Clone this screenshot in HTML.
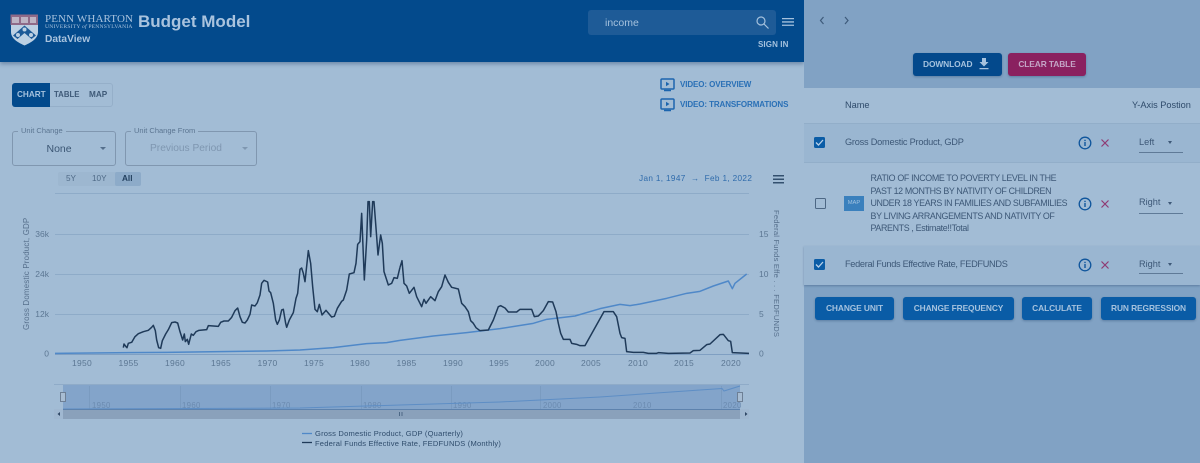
<!DOCTYPE html>
<html><head><meta charset="utf-8"><style>
html,body{margin:0;padding:0}
body{width:1200px;height:463px;position:relative;overflow:hidden;background:#a2bcd5;font-family:"Liberation Sans",sans-serif}
.t{position:absolute;white-space:nowrap;line-height:1}
.b{position:absolute;border-radius:3px;box-shadow:0 1px 2px rgba(30,60,100,.35);color:#a5c2de;font-size:8.400px;font-weight:bold;text-align:center;letter-spacing:-.1px}
.r{position:absolute;left:804px;width:396px}
.tx{color:#3d5877;font-size:9.200px;letter-spacing:-.3px}
.sel{color:#3d5877;font-size:9.200px}
.cb{position:absolute;left:814px;width:11px;height:11px;border-radius:1.500px;background:#0a5ca6}
.fs{position:absolute;border:1px solid #8097b0;border-radius:3px;box-sizing:border-box}
.leg{position:absolute;background:#a2bcd5;padding:0 3px;font-size:7.500px;color:#5b7591;line-height:10px}
</style></head><body>
<div style="position:absolute;left:0;top:0;width:804px;height:62px;background:#034a8c;box-shadow:0 2px 4px rgba(30,60,100,.4)"></div>
<div style="position:absolute;left:804px;top:0;width:396px;height:463px;background:#81a2c4"></div>

<svg style="position:absolute;left:10px;top:14px" width="29" height="32" viewBox="0 0 29 32">
<path d="M0.500 0.500H28V11H0.500Z" fill="#8f6a88"/>
<path d="M2 3h7v6H2zM11 3h7v6h-7zM20 3h6v6h-6z" fill="#d0d4de" opacity=".7"/>
<path d="M1 11H28V18C28 25 20 29 14.500 31.500C9 29 1 25 1 18Z" fill="#bcd0e3"/>
<path d="M14.500 11.500L26 21.500L21.500 25L14.500 19L7.500 25L3 21.500Z" fill="#1d5a97"/>
<circle cx="14.500" cy="15.500" r="2" fill="#bcd0e3"/><circle cx="8" cy="21" r="2" fill="#bcd0e3"/><circle cx="21" cy="21" r="2" fill="#bcd0e3"/>
</svg>
<div class="t" style="left:45px;top:14px;font-family:'Liberation Serif',serif;font-size:11px;color:#a9c3de;letter-spacing:.12px">PENN WHARTON</div>
<div class="t" style="left:45px;top:25px;font-family:'Liberation Serif',serif;font-size:5.600px;color:#a9c3de;letter-spacing:.2px">UNIVERSITY <i>of</i> PENNSYLVANIA</div>
<div class="t" style="left:45px;top:35px;font-size:10.200px;color:#a9c3de;font-weight:bold">DataView</div>
<div class="t" style="left:138px;top:13px;font-size:17px;color:#a9c3de;font-weight:bold">Budget Model</div>

<div style="position:absolute;left:588px;top:10px;width:188px;height:25px;border-radius:3px;background:#1e5b97"></div>
<div class="t" style="left:605px;top:17.500px;font-size:10.500px;color:#a5c1dd">income</div>
<svg style="position:absolute;left:755px;top:15px" width="15" height="15" viewBox="0 0 15 15" fill="none" stroke="#a5c1dd" stroke-width="1.200"><circle cx="6" cy="6" r="4"/><path d="M9 9l4.500 4.500"/></svg>
<svg style="position:absolute;left:782px;top:17px" width="12" height="10" viewBox="0 0 12 10" fill="#a5c1dd"><path d="M0 1h12v1.300H0zM0 4.300h12v1.300H0zM0 7.600h12v1.300H0z"/></svg>
<div class="t" style="left:758px;top:41px;font-size:8px;font-weight:bold;color:#a5c1dd;letter-spacing:.1px">SIGN IN</div>

<div style="position:absolute;left:12px;top:83px;width:101px;height:24px;border:1px solid #95afc9;box-sizing:border-box;border-radius:3px"></div>
<div style="position:absolute;left:12px;top:83px;width:38px;height:24px;background:#034a8c;border-radius:3px 0 0 3px"></div>
<div class="t" style="left:17px;top:91px;font-size:8.200px;font-weight:bold;color:#a5c1dd">CHART</div>
<div class="t" style="left:54px;top:91px;font-size:7.800px;font-weight:bold;color:#3f5a78">TABLE</div>
<div class="t" style="left:89px;top:91px;font-size:8.200px;font-weight:bold;color:#3f5a78">MAP</div>

<div class="fs" style="left:12px;top:131px;width:104px;height:35px"></div>
<div class="leg" style="left:18px;top:126px">Unit Change</div>
<div class="t" style="left:46.500px;top:143.500px;font-size:10.500px;color:#3b5674">None</div>
<div style="position:absolute;left:100px;top:147px;border:3px solid transparent;border-top:3.500px solid #556f8c"></div>
<div class="fs" style="left:125px;top:131px;width:132px;height:35px"></div>
<div class="leg" style="left:131px;top:126px">Unit Change From</div>
<div class="t" style="left:150px;top:143.500px;font-size:10.200px;color:#7f97b1">Previous Period</div>
<div style="position:absolute;left:242px;top:147px;border:3px solid transparent;border-top:3.500px solid #7f97b1"></div>

<svg style="position:absolute;left:660px;top:78px" width="15" height="14" viewBox="0 0 15 14" fill="none"><rect x="1" y="1" width="13" height="10" rx="1" stroke="#1c65ae" stroke-width="1.500"/><path d="M6 3.800l3.500 2.200-3.500 2.200z" fill="#1c65ae"/><path d="M4 12.500h7" stroke="#1c65ae" stroke-width="1.500"/></svg>
<svg style="position:absolute;left:660px;top:98px" width="15" height="14" viewBox="0 0 15 14" fill="none"><rect x="1" y="1" width="13" height="10" rx="1" stroke="#1c65ae" stroke-width="1.500"/><path d="M6 3.800l3.500 2.200-3.500 2.200z" fill="#1c65ae"/><path d="M4 12.500h7" stroke="#1c65ae" stroke-width="1.500"/></svg>
<div class="t" style="left:680px;top:81px;font-size:8px;font-weight:bold;color:#2a70b6;letter-spacing:-.1px">VIDEO: OVERVIEW</div>
<div class="t" style="left:680px;top:101px;font-size:8px;font-weight:bold;color:#2a70b6;letter-spacing:-.1px">VIDEO: TRANSFORMATIONS</div>

<div style="position:absolute;left:58px;top:172px;width:83px;height:14px;border-radius:2px;background:#9db7d0"></div>
<div style="position:absolute;left:115px;top:172px;width:26px;height:14px;border-radius:2px;background:#8dabc9"></div>
<div class="t" style="left:66px;top:175px;font-size:8.200px;color:#4f6a87">5Y</div>
<div class="t" style="left:92px;top:175px;font-size:8.200px;color:#4f6a87">10Y</div>
<div class="t" style="left:122px;top:175px;font-size:8.200px;font-weight:bold;color:#23405f">All</div>
<div class="t" style="left:639px;top:175px;font-size:8.200px;color:#2f6bab;letter-spacing:.35px">Jan 1, 1947 &nbsp;→&nbsp; Feb 1, 2022</div>
<svg style="position:absolute;left:773px;top:175px" width="11" height="9" viewBox="0 0 11 9" fill="#33506f"><path d="M0 0h11v1.500H0zM0 3.500h11v1.500H0zM0 7h11v1.500H0z"/></svg>

<svg style="position:absolute;left:0;top:0" width="804" height="463" font-family="'Liberation Sans',sans-serif">
<g stroke="#8eabc8" stroke-width="1"><path d="M55 193.500H749M55 234.500H749M55 274.500H749M55 314.500H749"/><path d="M55 354.500H749" stroke="#7f9fc2"/></g>
<g font-size="8.500" fill="#5c7793" text-anchor="end"><text x="49" y="237">36k</text><text x="49" y="277">24k</text><text x="49" y="317">12k</text><text x="49" y="356.500">0</text></g>
<g font-size="8.500" fill="#5c7793"><text x="759" y="237">15</text><text x="759" y="277">10</text><text x="759" y="317">5</text><text x="759" y="356.500">0</text></g>
<g font-size="8.500" fill="#5c7793" text-anchor="middle" letter-spacing=".3"><text x="82" y="366">1950</text><text x="128.500" y="366">1955</text><text x="175" y="366">1960</text><text x="221" y="366">1965</text><text x="267.500" y="366">1970</text><text x="314" y="366">1975</text><text x="360" y="366">1980</text><text x="406.500" y="366">1985</text><text x="453" y="366">1990</text><text x="499" y="366">1995</text><text x="545" y="366">2000</text><text x="591" y="366">2005</text><text x="638" y="366">2010</text><text x="684" y="366">2015</text><text x="731" y="366">2020</text></g>
<text transform="translate(29 330) rotate(-90)" font-size="7.900" fill="#566f8c" letter-spacing=".2">Gross Domestic Product, GDP</text>
<text transform="translate(774 210) rotate(90)" font-size="7.600" fill="#566f8c" letter-spacing=".2">Federal Funds Effe . . . FEDFUNDS</text>

<g fill="none" stroke-linejoin="round">
<g transform="translate(0 180) scale(.33333)">
<path stroke="#4f88c8" stroke-width="4.500" d="M165 520L500 517L800 513L900 510L1000 503L1100 491L1160 488L1200 481"/>
<path stroke="#1f3a59" stroke-width="4.500" d="M370 503L372 492L378 500L381 503L385 490L395 487L405 470L415 461L430 455L445 451L455 442L460 436L466 452L470 480L476 503L482 505L487 482L497 462L505 449L515 428L525 426L533 429L540 455L548 480L553 462L556 485L562 478L566 493L574 462L580 466L588 455L597 451L620 449L625 437L655 439L662 427L672 423L685 423L695 412L705 392L713 384L720 410L727 427L735 429L742 420L750 403L755 375L765 378L772 368L780 345L785 310L792 301L803 306L807 333L812 338L820 370L827 420L832 433L838 420L845 390L850 388L857 430L860 442L868 420L880 398L888 355L893 340L900 268L905 264L910 280L915 305L925 212L932 250L938 320L945 388L952 395L958 373L966 405L978 391L995 411L1003 409L1012 385L1025 364L1030 360L1040 330L1048 282L1062 278L1068 250L1073 193L1080 185L1085 100L1093 300L1100 180L1104 65L1108 65L1112 170L1118 65L1122 65L1130 170L1134 225L1142 165L1147 190L1152 275L1165 315L1175 310L1182 293L1192 295L1200 262"/>
</g>
<g transform="translate(400 180) scale(.33333)">
<path stroke="#4f88c8" stroke-width="4.500" d="M0 481L100 468L200 458L300 446L400 430L440 418L525 408L600 386L660 373L690 377L720 372L800 355L860 340L900 334L940 318L985 303L997 326L1005 310L1040 282"/>
<path stroke="#1f3a59" stroke-width="4.500" d="M0 262L6 242L12 310L20 318L28 340L42 322L50 350L65 380L72 358L78 370L92 350L105 362L115 335L125 320L135 285L145 307L155 322L175 327L185 370L195 380L205 395L212 422L220 430L228 443L240 452L265 450L280 420L295 380L302 377L315 384L325 396L350 396L360 388L395 388L403 410L415 408L430 392L445 365L458 366L468 395L475 430L482 460L490 478L510 478L515 490L530 493L540 497L555 497L612 395L640 395L650 410L660 460L665 473L675 475L680 515L700 517L730 517L745 520L770 520L775 518L805 520L870 519L880 512L900 511L920 494L930 492L960 464L970 463L985 482L992 484L997 518L1047 520"/>
</g>
</g>

<!-- navigator -->
<rect x="54" y="385" width="695" height="24" fill="#a2bcd5"/>
<rect x="63" y="385" width="677" height="24" fill="#83a4ca"/>
<path d="M54 384.500H749" stroke="#8fabc8"/>
<g stroke="#7a9bc0"><path d="M89.500 386V409M180.500 386V409M270.500 386V409M361.500 386V409M451.500 386V409M540.500 386V409M721.500 386V409"/></g>
<g font-size="7.800" fill="#6b8bb0" letter-spacing=".35"><text x="92" y="408">1950</text><text x="182" y="408">1960</text><text x="272" y="408">1970</text><text x="363" y="408">1980</text><text x="453" y="408">1990</text><text x="543" y="408">2000</text><text x="633" y="408">2010</text><text x="723" y="408">2020</text></g>
<path d="M63 409L300 408L400 405L500 402L600 397L700 390L722 388.500L724 391L740 386" fill="none" stroke="#5e8ec5" stroke-width="1"/>
<rect x="54" y="409" width="695" height="10" fill="#8aa1bb"/>
<path d="M63 409.500H740" stroke="#5d82ad" stroke-width="1"/>
<rect x="54" y="409" width="9" height="10" fill="#a0b8d1"/><rect x="740" y="409" width="9" height="10" fill="#a0b8d1"/>
<path d="M60 412v4l-2.500-2zM745 412v4l2.500-2z" fill="#2f4866"/>
<path d="M399.500 412v4M402 412v4" stroke="#34506f" stroke-width=".7"/>
<rect x="60.500" y="392.500" width="5" height="9" fill="#a8bdd3" stroke="#6d7f95"/><rect x="737.500" y="392.500" width="5" height="9" fill="#a8bdd3" stroke="#6d7f95"/>

<path d="M302 433.500H312" stroke="#4f88c8" stroke-width="1.300"/><path d="M302 442.500H312" stroke="#1f3a59" stroke-width="1.300"/>
<g font-size="7.550" fill="#2f4c6c" letter-spacing=".2"><text x="315" y="436">Gross Domestic Product, GDP (Quarterly)</text><text x="315" y="446">Federal Funds Effective Rate, FEDFUNDS (Monthly)</text></g>
</svg>

<!-- right panel -->
<svg style="position:absolute;left:818px;top:15px" width="36" height="11" viewBox="0 0 36 11" fill="none" stroke="#3e5b7b" stroke-width="1.200"><path d="M5.500 2L2.500 5.500L5.500 9M27 2L30 5.500L27 9"/></svg>
<div class="b" style="left:913px;top:53px;width:89px;height:23px;background:#03498c;line-height:22px;text-align:left;text-indent:10px">DOWNLOAD</div>
<svg style="position:absolute;left:979px;top:58px" width="10" height="12" viewBox="0 0 10 12" fill="#a5c2de"><path d="M3 0h4v4h2.500L5 8.500L.5 4H3zM.5 10h9v1.300h-9z"/></svg>
<div class="b" style="left:1008px;top:53px;width:78px;height:23px;background:#8a2160;color:#c4a5c6;line-height:22px">CLEAR TABLE</div>

<div class="r" style="top:88px;height:36px;background:#a2bcd5;border-bottom:1px solid #92aec9;box-sizing:border-box"></div>
<div class="r" style="top:124px;height:39px;background:#9ab6d1;border-bottom:1px solid #92aec9;box-sizing:border-box"></div>
<div class="r" style="top:163px;height:83px;background:#a2bcd5"></div>
<div class="r" style="top:246px;height:39px;background:#9ab6d1;box-shadow:0 1px 2px rgba(40,70,110,.4)"></div>
<div class="t" style="left:845px;top:101px;font-size:9.200px;color:#2f4b6b">Name</div>
<div class="t" style="left:1132px;top:101px;font-size:9.200px;color:#2f4b6b">Y-Axis Postion</div>

<div class="cb" style="top:137px"></div>
<svg style="position:absolute;left:814px;top:137px" width="11" height="11" fill="none" stroke="#b8d0e8" stroke-width="1.300"><path d="M2 5.500L4.500 8L9 3"/></svg>
<div class="t tx" style="left:845px;top:138px;letter-spacing:-.22px">Gross Domestic Product, GDP</div>

<div style="position:absolute;left:814.500px;top:198px;width:11px;height:11px;border:1.300px solid #4d6784;border-radius:1.500px;box-sizing:border-box"></div>
<div style="position:absolute;left:844px;top:196px;width:20px;height:15px;background:#3a80bd;color:#9fc0df;font-size:5.800px;text-align:center;line-height:15px">MAP</div>
<div class="t tx" style="left:870.500px;top:172px;line-height:12.500px;font-size:8.900px;letter-spacing:-.35px">RATIO OF INCOME TO POVERTY LEVEL IN THE<br>PAST 12 MONTHS BY NATIVITY OF CHILDREN<br>UNDER 18 YEARS IN FAMILIES AND SUBFAMILIES<br>BY LIVING ARRANGEMENTS AND NATIVITY OF<br>PARENTS , Estimate!!Total</div>

<div class="cb" style="top:259px"></div>
<svg style="position:absolute;left:814px;top:259px" width="11" height="11" fill="none" stroke="#b8d0e8" stroke-width="1.300"><path d="M2 5.500L4.500 8L9 3"/></svg>
<div class="t tx" style="left:845px;top:260px">Federal Funds Effective Rate, FEDFUNDS</div>

<svg style="position:absolute;left:1078px;top:136px" width="34" height="14" viewBox="0 0 34 14"><circle cx="7" cy="7" r="5.800" fill="none" stroke="#0f559c" stroke-width="1.300"/><path d="M6.300 6h1.400v4H6.300zM6.300 3.800h1.400v1.300H6.300z" fill="#0f559c"/><path d="M23.500 3.500l7 7M30.500 3.500l-7 7" stroke="#8f3a73" stroke-width="1.200"/></svg>
<svg style="position:absolute;left:1078px;top:197px" width="34" height="14" viewBox="0 0 34 14"><circle cx="7" cy="7" r="5.800" fill="none" stroke="#0f559c" stroke-width="1.300"/><path d="M6.300 6h1.400v4H6.300zM6.300 3.800h1.400v1.300H6.300z" fill="#0f559c"/><path d="M23.500 3.500l7 7M30.500 3.500l-7 7" stroke="#8f3a73" stroke-width="1.200"/></svg>
<svg style="position:absolute;left:1078px;top:258px" width="34" height="14" viewBox="0 0 34 14"><circle cx="7" cy="7" r="5.800" fill="none" stroke="#0f559c" stroke-width="1.300"/><path d="M6.300 6h1.400v4H6.300zM6.300 3.800h1.400v1.300H6.300z" fill="#0f559c"/><path d="M23.500 3.500l7 7M30.500 3.500l-7 7" stroke="#8f3a73" stroke-width="1.200"/></svg>

<div class="t sel" style="left:1139px;top:138px">Left</div>
<div class="t sel" style="left:1139px;top:198px">Right</div>
<div class="t sel" style="left:1139px;top:260px">Right</div>
<div style="position:absolute;left:1168px;top:141px;border:2.700px solid transparent;border-top:3px solid #3d5877"></div>
<div style="position:absolute;left:1168px;top:202px;border:2.700px solid transparent;border-top:3px solid #3d5877"></div>
<div style="position:absolute;left:1168px;top:263px;border:2.700px solid transparent;border-top:3px solid #3d5877"></div>
<div style="position:absolute;left:1139px;top:151.500px;width:44px;height:1px;background:#5f7a97"></div>
<div style="position:absolute;left:1139px;top:212.500px;width:44px;height:1px;background:#5f7a97"></div>
<div style="position:absolute;left:1139px;top:273px;width:44px;height:1px;background:#5f7a97"></div>

<div class="b" style="left:815px;top:297px;width:79px;height:23px;background:#0a5ca6;line-height:22px">CHANGE UNIT</div>
<div class="b" style="left:903px;top:297px;width:111px;height:23px;background:#0a5ca6;line-height:22px">CHANGE FREQUENCY</div>
<div class="b" style="left:1022px;top:297px;width:70px;height:23px;background:#0a5ca6;line-height:22px">CALCULATE</div>
<div class="b" style="left:1101px;top:297px;width:95px;height:23px;background:#0a5ca6;line-height:22px">RUN REGRESSION</div>
</body></html>
